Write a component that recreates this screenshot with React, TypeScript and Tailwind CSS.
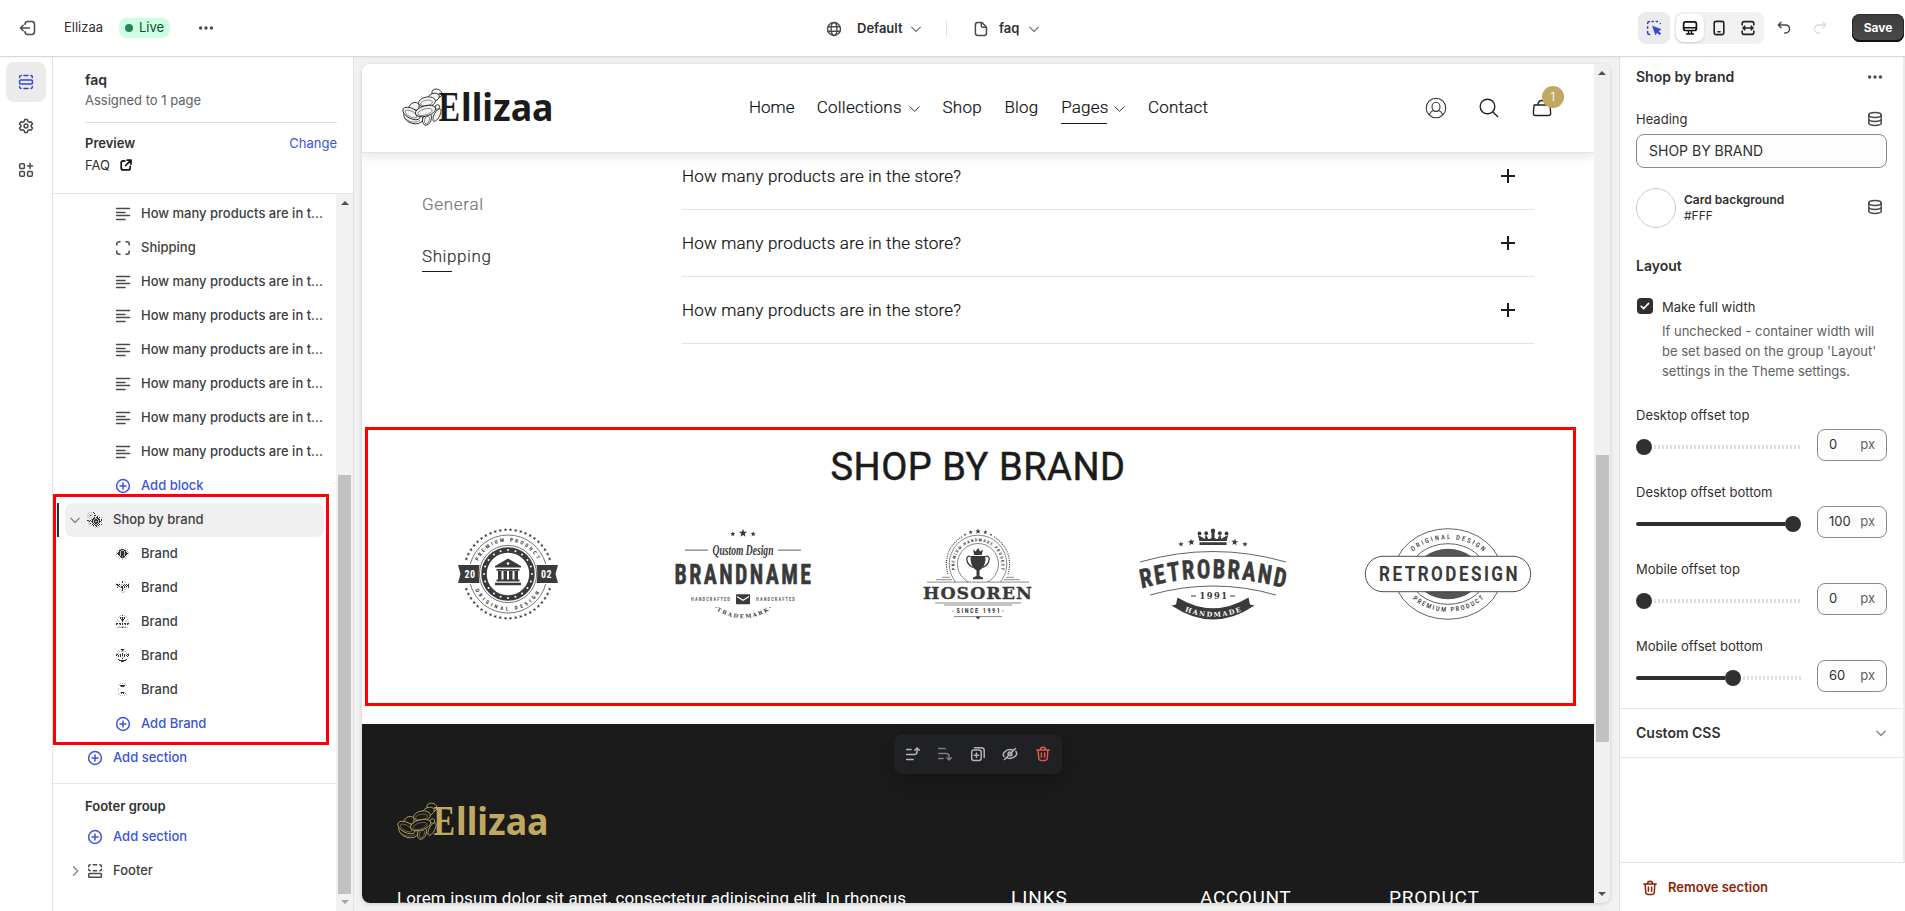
import React from "react";
import type { ReactNode } from "react";

const INK = "#3a3a3a";

type IconProps = { children: ReactNode; className?: string; sw?: number };
function Icon({ children, className = "text-[#4a4a4a]", sw = 1.5 }: IconProps) {
  return (
    <svg
      viewBox="0 0 20 20"
      width={20}
      height={20}
      fill="none"
      stroke="currentColor"
      strokeWidth={sw}
      strokeLinecap="round"
      strokeLinejoin="round"
      className={"block shrink-0 " + className}
    >
      {children}
    </svg>
  );
}

/* ---------- icons ---------- */
const ExitIcon = () => (
  <Icon>
    <path d="M7 6.500v-.2C7 4.700 8.200 3.600 9.700 3.600h4.100c1.600 0 2.700 1.200 2.700 2.700v7.400c0 1.600-1.200 2.700-2.700 2.700H9.700C8.200 16.400 7 15.300 7 13.700v-.2" />
    <path d="M11.500 10h-9M5.200 7.200 2.500 10l2.700 2.800" />
  </Icon>
);
const DotsIcon = () => (
  <Icon>
    <g fill="currentColor" stroke="none">
      <circle cx="4.600" cy="10" r="1.700" />
      <circle cx="10" cy="10" r="1.700" />
      <circle cx="15.400" cy="10" r="1.700" />
    </g>
  </Icon>
);
const GlobeIcon = () => (
  <Icon sw={1.400}>
    <circle cx="10" cy="10" r="6.500" />
    <ellipse cx="10" cy="10" rx="2.900" ry="6.500" />
    <path d="M4 7.800h12M4 12.200h12" />
  </Icon>
);
const PageIcon = () => (
  <Icon>
    <path d="M6.700 3.600h3.600c.5 0 1 .2 1.400.6l3.200 3.300c.4.400.600.900.600 1.400v5c0 1.400-1 2.500-2.400 2.500H6.700c-1.400 0-2.300-1-2.300-2.400V6c0-1.400 1-2.400 2.300-2.400Z" />
    <path d="M10.300 3.900v2.800c0 .9.700 1.600 1.600 1.600h3.200" />
  </Icon>
);
const ChevronDown = ({ className = "text-[#8a8a8a]" }: { className?: string }) => (
  <Icon className={className}>
    <path d="m5.800 8.300 4.200 4.200 4.200-4.200" />
  </Icon>
);
const SectionsIcon = () => (
  <Icon className="text-[#3045d8]">
    <rect x="3.600" y="8" width="12.800" height="4" rx="1" />
    <path d="M3.600 5.400v-.2c0-.9.600-1.600 1.500-1.600M8 3.600h4M14.900 3.600c.9 0 1.500.7 1.500 1.600v.2M3.600 14.600v.2c0 .9.600 1.600 1.500 1.600M8 16.400h4M14.900 16.400c.9 0 1.500-.7 1.500-1.600v-.2" />
  </Icon>
);
const GearIcon = () => (
  <Icon>
    <path d="M8.700 3.500h2.600l.5 1.900 1.500.9 1.900-.5 1.300 2.200-1.400 1.400v1.200l1.400 1.400-1.300 2.200-1.900-.5-1.500.9-.5 1.900H8.700l-.5-1.900-1.500-.9-1.900.5L3.500 12l1.400-1.400V9.400L3.500 8l1.300-2.200 1.900.5 1.500-.9.500-1.900Z" />
    <circle cx="10" cy="10" r="1.900" />
  </Icon>
);
const AppsIcon = () => (
  <Icon>
    <rect x="3.700" y="3.700" width="4.700" height="4.700" rx="1" />
    <rect x="3.700" y="11.600" width="4.700" height="4.700" rx="1" />
    <rect x="11.600" y="11.600" width="4.700" height="4.700" rx="1" />
    <path d="M14 3.500v5M11.500 6h5" />
  </Icon>
);
const ExternalIcon = () => (
  <svg viewBox="0 0 12 12" width={12} height={12} fill="none" stroke="#111" strokeWidth={1.700} strokeLinecap="round" strokeLinejoin="round">
    <path d="M4.800 1.900H3.200c-1.200 0-2 .8-2 2v5c0 1.200.8 2 2 2h5c1.200 0 2-.8 2-2V7.400M7.200 1.100h3.800v3.800M10.700 1.400 5.600 6.500" />
  </svg>
);
const LinesIcon = () => (
  <Icon className="text-[#4a4a4a]">
    <path d="M3.500 4.500h13.200M3.500 8.500h8.600M3.500 11.500h13.200M3.500 15.500h8.600" strokeWidth={1.300} />
  </Icon>
);
const BlockIcon = () => (
  <Icon>
    <path d="M7 3.800H6A2.200 2.200 0 0 0 3.800 6v1M13 3.800h1A2.200 2.200 0 0 1 16.200 6v1M7 16.200H6A2.200 2.200 0 0 1 3.800 14v-1M13 16.200h1a2.200 2.200 0 0 0 2.200-2.200v-1" />
  </Icon>
);
const PlusCircle = () => (
  <Icon className="text-[#3c54dc]">
    <circle cx="10" cy="10" r="6.400" />
    <path d="M10 7v6M7 10h6" />
  </Icon>
);
const FooterIcon = () => (
  <Icon>
    <rect x="3.700" y="12.600" width="12.700" height="3.700" rx=".8" />
    <path d="M3.700 5.800v-.6c0-.9.600-1.500 1.500-1.500M8.300 3.700h3.400M14.900 3.700c.9 0 1.500.6 1.500 1.500v.6M3.700 8.200c0 .9.600 1.500 1.500 1.500M8.300 9.700h3.400M14.900 9.700c.9 0 1.500-.6 1.500-1.500" />
  </Icon>
);
const DatabaseIcon = () => (
  <span className="-mt-0.5">
    <Icon>
      <ellipse cx="10" cy="6" rx="6.200" ry="2.400" />
      <path d="M3.800 6v8c0 1.300 2.800 2.400 6.200 2.400s6.200-1.100 6.200-2.400V6M3.800 10c0 1.300 2.800 2.400 6.200 2.400s6.200-1.100 6.200-2.400" />
    </Icon>
  </span>
);
const TrashIcon = () => (
  <Icon className="text-[#8e1f0b]">
    <path d="M3.800 6h12.400M7.500 5.800c0-1.500 1-2.500 2.500-2.500s2.500 1 2.500 2.500M5.200 6l.5 8.300c.1 1.200 1 2.100 2.200 2.100h4.200c1.200 0 2.100-.9 2.200-2.100l.5-8.300M8.400 9v4.300M11.600 9v4.300" />
  </Icon>
);

/* ---------- logos ---------- */
function EllizaaLogo({ color, petal }: { color: string; petal: string }) {
  return (
    <svg width={152} height={38} viewBox="0 0 152 38" className="block shrink-0 overflow-visible">
      <g fill={petal} stroke={color} strokeWidth={0.8}>
        <ellipse cx="35" cy="5.200" rx="5.200" ry="4" transform="rotate(20 35 5.200)" />
        <ellipse cx="31.500" cy="9.500" rx="6" ry="4" transform="rotate(-20 31.500 9.500)" />
        <ellipse cx="12" cy="19" rx="5.500" ry="4.200" transform="rotate(-30 12 19)" />
        <ellipse cx="11.500" cy="28.500" rx="10" ry="7" transform="rotate(18 11.500 28.500)" />
        <ellipse cx="9.500" cy="25.500" rx="9.500" ry="5" transform="rotate(28 9.500 25.500)" />
        <ellipse cx="25" cy="14" rx="8.500" ry="5" transform="rotate(-10 25 14)" />
        <ellipse cx="35" cy="27" rx="2.800" ry="7" transform="rotate(28 35 27)" />
        <ellipse cx="25" cy="31" rx="4.200" ry="6.500" transform="rotate(18 25 31)" />
        <ellipse cx="23.500" cy="23" rx="10.500" ry="5.200" transform="rotate(-16 23.500 23)" />
        <circle cx="35.500" cy="19" r="2.300" />
        <g strokeWidth={0.45} fill="none">
          <ellipse cx="24.500" cy="15" rx="6" ry="2.800" transform="rotate(-10 24.500 15)" />
          <ellipse cx="23" cy="24" rx="7.500" ry="3" transform="rotate(-16 23 24)" />
          <ellipse cx="25" cy="32" rx="2.300" ry="4" transform="rotate(18 25 32)" />
          <ellipse cx="9" cy="26" rx="6.500" ry="2.800" transform="rotate(28 9 26)" />
          <path d="M4 31c4 3.500 9 4 14 1.500" />
        </g>
      </g>
      <text x="36.500" y="32.500" fill={color} fontFamily="'Liberation Serif', serif" fontWeight={700} fontSize={43} textLength={21.500} lengthAdjust="spacingAndGlyphs">E</text>
      <text x="59" y="32.500" fill={color} fontFamily="'Noto Sans', sans-serif" fontWeight={700} fontSize={37.500} textLength={92.500} lengthAdjust="spacingAndGlyphs">llizaa</text>
    </svg>
  );
}

function star(cx: number, cy: number, r: number, rot = 0) {
  const pts: string[] = [];
  for (let i = 0; i < 10; i++) {
    const a = ((i * 36 - 90 + rot) * Math.PI) / 180;
    const q = i % 2 ? r * 0.42 : r;
    pts.push(`${(cx + q * Math.cos(a)).toFixed(2)},${(cy + q * Math.sin(a)).toFixed(2)}`);
  }
  return pts.join(" ");
}

function BadgeFrame({ children }: { children: ReactNode }) {
  return (
    <svg viewBox="-100 -46 200 92" width={200} height={92} fill={INK} className="block overflow-visible">
      {children}
    </svg>
  );
}

function BankBadge() {
  const stars = Array.from({ length: 54 }, (_, i) => i * (360 / 54)).filter(
    (a) => Math.abs(44.5 * Math.sin((a * Math.PI) / 180)) > 11
  );
  const dots = Array.from({ length: 20 }, (_, i) => (i * Math.PI) / 10);
  return (
    <BadgeFrame>
      <defs>
        <path id="bank-top" d="M-32.500 0A32.500 32.500 0 0 1 32.500 0" />
        <path id="bank-bottom" d="M-36.500 0A36.500 36.500 0 0 0 36.500 0" />
      </defs>
      {stars.map((a) => {
        const r = (a * Math.PI) / 180;
        return <polygon key={a} points={star(44.3 * Math.cos(r), 44.3 * Math.sin(r), 1.9, a + 90)} />;
      })}
      <g fill="none" stroke={INK}>
        <path d="M-37.700-10A39 39 0 0 1 37.700-10M-37.700 10A39 39 0 0 0 37.700 10" strokeWidth={0.7} />
        <circle r="28.600" strokeWidth={0.7} />
        <circle r="24" strokeWidth={5.500} />
      </g>
      {dots.map((a) => (
        <circle key={a} cx={24 * Math.cos(a)} cy={24 * Math.sin(a)} r={1} fill="#fff" />
      ))}
      <path d="M-50-9H-28.500Q-30 0-28.500 9H-50L-47.500 0ZM50-9H28.500Q30 0 28.500 9H50L47.500 0Z" />
      <g fontFamily="'Roboto Condensed', sans-serif" fontWeight={700} textAnchor="middle">
        <text x="-38" y="3.600" fontSize={10} fill="#fff" letterSpacing=".5">20</text>
        <text x="38.500" y="3.600" fontSize={10} fill="#fff" letterSpacing=".5">02</text>
        <text fontSize={5.200} letterSpacing="2.200">
          <textPath href="#bank-top" startOffset="50%">PREMIUM PRODUCT</textPath>
        </text>
        <text fontSize={5.200} letterSpacing="2.900">
          <textPath href="#bank-bottom" startOffset="50%">ORIGINAL DESIGN</textPath>
        </text>
      </g>
      <path d="M0-15.500 13-8v1.500H-13V-8ZM-11.500-5H11.500v1.700H-11.500ZM-10-3H-6.500V6H-10ZM-4.500-3H-1V6H-4.500ZM1-3H4.500V6H1ZM6.500-3H10V6H6.500ZM-11.500 5.500H11.500V7.500H-11.500ZM-13 8.700H13V11.200H-13Z" />
      <circle cy="-10.500" r="1.300" fill="#fff" />
    </BadgeFrame>
  );
}

function BrandnameBadge() {
  return (
    <BadgeFrame>
      <defs>
        <path id="tm" d="M-31 33.500Q0 55 31 33.500" />
      </defs>
      <polygon points={star(0, -40.8, 4.400)} />
      <polygon points={star(-10.200, -40, 2.700)} />
      <polygon points={star(10.200, -40, 2.700)} />
      <path d="M-58-24.400H-35v1.200H-58ZM35-24.400H58v1.200H35Z" opacity=".65" />
      <text x="-30.500" y="-19.500" fontFamily="'Liberation Serif', serif" fontStyle="italic" fontWeight={700} fontSize={14.500} textLength={61} lengthAdjust="spacingAndGlyphs">Qustom Design</text>
      <g fontFamily="'Roboto Condensed', sans-serif" fontWeight={700}>
        <text x="-68.500" y="10" fontSize={27.700} letterSpacing="3" textLength={139} lengthAdjust="spacingAndGlyphs" stroke={INK} strokeWidth={0.5}>BRANDNAME</text>
        <g fontSize={5.600} opacity=".8">
          <text x="-52" y="27.300" letterSpacing="1.400" textLength={40} lengthAdjust="spacingAndGlyphs">HANDCRAFTED</text>
          <text x="13" y="27.300" letterSpacing="1.400" textLength={40} lengthAdjust="spacingAndGlyphs">HANDCRAFTED</text>
        </g>
      </g>
      <rect x="-7" y="20.300" width="14" height="10" rx=".8" />
      <path d="M-6 22.500 0 26.300 6 22.500" fill="none" stroke="#fff" strokeWidth={1.100} />
      <text fontFamily="'DejaVu Serif', serif" fontWeight={700} fontSize={5.400} textAnchor="middle" letterSpacing="1.800">
        <textPath href="#tm" startOffset="51%">TRADEMARK</textPath>
      </text>
      <circle cx="-27" cy="33.500" r=".6" />
      <circle cx="27" cy="33.500" r=".6" />
    </BadgeFrame>
  );
}

function HosorenBadge() {
  return (
    <BadgeFrame>
      <defs>
        <path id="cup-arc" d="M-19.500 4A23.500 23.500 0 1 1 19.500 4" />
        <clipPath id="cup-clip">
          <rect x="-60" y="-46" width="120" height="54" />
        </clipPath>
      </defs>
      <polygon points={star(0, -42.600, 2.900)} />
      {[-1, 1].map((s) => (
        <g key={s}>
          <polygon points={star(7.300 * s, -41.700, 2.200)} />
          <polygon points={star(13 * s, -39.300, 1.500)} />
        </g>
      ))}
      <g fill="none" stroke={INK} strokeWidth={0.6}>
        <path d="M-36 3.300H-28M28 3.300H36M-42 5.700H-26M26 5.700H42M-51 8.100H51M-43 29H43M-34 31H34M-24 42.600H24" />
        <g clipPath="url(#cup-clip)">
          <circle cy="-10" r="28.800" />
          <circle cy="-10" r="20.500" />
        </g>
        <path d="M-30 0A31.500 31.500 0 0 1-16-37.200M30 0A31.500 31.500 0 0 0 16-37.200" strokeWidth={1.200} strokeDasharray="1 1.200" />
      </g>
      <text fontFamily="'Roboto Condensed', sans-serif" fontWeight={700} fontSize={4.200} textAnchor="middle" letterSpacing="1.200">
        <textPath href="#cup-arc" startOffset="50.500%">PREMIUM HANDMADE PRODUCT</textPath>
      </text>
      <path d="M-3.800-19-5-24.500-2.300-22.500 0-26 2.300-22.500 5-24.500 3.800-19ZM-7.500-18H7.500Q8-7 1.500-3.500V2L5 3.500V5.200H-5V3.500L-1.500 2V-3.500Q-8-7-7.500-18Z" />
      <path d="M-7.500-17.500C-13-19.500-12.500-10-5-6.500M7.500-17.500C13-19.500 12.500-10 5-6.500" fill="none" stroke={INK} strokeWidth={1.300} />
      <text x="-55" y="24.500" fontFamily="'DejaVu Serif', serif" fontWeight={700} fontSize={17.200} textLength={110} letterSpacing="1" lengthAdjust="spacingAndGlyphs" stroke={INK} strokeWidth={0.3}>HOSOREN</text>
      <text x="-21.500" y="39.300" fontFamily="'Roboto Condensed', sans-serif" fontWeight={700} fontSize={7} letterSpacing="1.800" textLength={45} lengthAdjust="spacingAndGlyphs">SINCE 1991</text>
      <circle cx="-25" cy="37" r=".6" />
      <circle cx="25" cy="37" r=".6" />
      <path d="M-2.500 42.600H2.500L0 45.500Z" />
    </BadgeFrame>
  );
}

function RetrobrandBadge() {
  return (
    <BadgeFrame>
      <defs>
        <path id="rb-arc" d="M-92 16.500Q0-8.500 92 16.500" />
        <path id="rb-ribbon" d="M-36 32Q0 50.500 36 32" />
      </defs>
      <path d="M-13.500-33-15.200-39-10.500-36.500-8.500-34.500-7-40-4.500-34.500-1.500-36V-43H1.500V-36L4.500-34.500 7-40 8.500-34.500 10.500-36.500 15.200-39 13.500-33ZM-13.500-31.800H13.500V-29H-13.500Z" />
      <path d="M-13.500-38V-33H13.500V-38L8.500-35H-8.500Z" />
      <circle cy="-43.300" r="2.200" />
      {[-1, 1].map((s) => (
        <g key={s}>
          <circle cx={6.800 * s} cy="-40.800" r="1.900" />
          <circle cx={13.500 * s} cy="-40.600" r="1.900" />
          <polygon points={star(21.700 * s, -31.800, 3.600, 8 * s)} />
          <polygon points={star(32 * s, -29.800, 2.800, 8 * s)} />
        </g>
      ))}
      <path d="M-73-12Q0-33 73-12M-63 21Q0 3 63 21" fill="none" stroke={INK} strokeWidth={0.8} />
      <text transform="scale(.85 1)" fontFamily="'Roboto Condensed', sans-serif" fontWeight={700} fontSize={26.500} textAnchor="middle" letterSpacing="2.300" stroke={INK} strokeWidth={0.5}>
        <textPath href="#rb-arc" startOffset="50.600%">RETROBRAND</textPath>
      </text>
      <path d="M-22 21.500H-17v1H-22ZM17 21.500H22v1H17Z" />
      <text x="-13.500" y="25.300" fontFamily="'DejaVu Serif', serif" fontWeight={700} fontSize={8.500} letterSpacing="1.500" textLength={29} lengthAdjust="spacingAndGlyphs">1991</text>
      <path d="M-35.500 23.500Q0 45 35.500 23.500L37 30.500 41.500 31.500Q0 59.500-41.500 31.500L-37 30.500Z" />
      <text fontFamily="'DejaVu Serif', serif" fontWeight={700} fontSize={6.600} textAnchor="middle" letterSpacing="1.500" fill="#fff" dy="1.500">
        <textPath href="#rb-ribbon" startOffset="51%">HANDMADE</textPath>
      </text>
    </BadgeFrame>
  );
}

function RetrodesignBadge() {
  return (
    <BadgeFrame>
      <defs>
        <path id="rd-top" d="M-43-12A46 35.500 0 0 1 43-12" />
        <path id="rd-bottom" d="M-45 12A48 39.500 0 0 0 45 12" />
      </defs>
      <g fill="none" stroke={INK} strokeWidth={0.8}>
        <ellipse rx="54" ry="45.300" />
        <ellipse rx="38.500" ry="30.300" />
      </g>
      <ellipse rx="32.400" ry="25.300" fill="#555" />
      <rect x="-82.700" y="-17.700" width="165.400" height="35.400" rx="17.700" fill="#fff" stroke={INK} strokeWidth={0.9} />
      <text x="-69" y="7.400" fontFamily="Roboto, sans-serif" fontWeight={700} fontSize={21} letterSpacing="3" textLength={141} lengthAdjust="spacingAndGlyphs">RETRODESIGN</text>
      <g fontFamily="'Roboto Condensed', sans-serif" fontWeight={500} textAnchor="middle" fontSize={6.600}>
        <text letterSpacing="2">
          <textPath href="#rd-top" startOffset="51%">ORIGINAL DESIGN</textPath>
        </text>
        <text letterSpacing="1.700">
          <textPath href="#rd-bottom" startOffset="51%">PREMIUM PRODUCT</textPath>
        </text>
      </g>
    </BadgeFrame>
  );
}

/* ---------- thumbnails of the brand blocks ---------- */
const THUMBS: string[][] = [
  ["......o......", "...o.....o...", "....o###o....", "..o##ooo##o..", ".o.#o###o#.o.", "o.##o###o##.o", ".###o###o###.", "o.##o###o##.o", "...#o###o#...", "..o.##o##.o..", "....o###o....", "...o..o..o...", "......o......"],
  ["......#......", "...o..#..o...", "o...........o", "##o#.oo.#.#.#", ".##.o..#.#.##", "..o#.##.#.#.#", ".#..o##.#.o.#", "......#o.....", "...o..#..o...", "......#......", ".....o..o....", "......oo.....", "............."],
  ["....o.#.o....", "...o.....o...", "..o.#o#o#.o..", "....#.#.#....", ".o...###...o.", "..o..o#o..o..", "o..o..#..o..o", "......o......", "##.##.#.##.##", "#o.o#.#.o#.#o", ".............", "...o.ooo.o...", ".ooooo#ooooo."],
  ["....o###o....", ".....o#o.....", "...o.ooo.o...", ".............", "o.o...#...o.o", "##.o#.#.#o.##", "#.#.#.#.#.#.#", "..#.#.o.#..#.", "o....o.o....o", "......#......", "..#o.....o#..", "...#######...", ".....###....."],
  ["....o.o.o....", "...o.....o...", "..o.#####.o..", "....o###o....", ".............", "..o..........", ".............", "..o..........", ".............", "....o###o....", "...o.#.#.o...", "..o.......o..", "....o.o.o...."],
];
function Thumb({ rows, box = "-3 -3 20 20" }: { rows: string[]; box?: string }) {
  return (
    <svg width={20} height={20} viewBox={box} className="block shrink-0" shapeRendering="crispEdges">
      {rows.flatMap((r, y) =>
        r.split("").map((ch, x) =>
          ch === "." ? null : <rect key={x + "-" + y} x={x} y={y} width={1} height={1} fill={ch === "#" ? "#333" : "#bdbdbd"} />
        )
      )}
    </svg>
  );
}
const GROUP_THUMB = [
  "..o.o.#.........", ".o..o..#........", "o.o..o..........", ".o.#o..##..o....", "o.o..o..o.#.....", ".o..o.o#.##.#.o.", "..o.o.##oo##....", "....o##o##o##.#.", "##.#.#o####o#.#.", ".o#.##o#oo#o##..", "..o..#o####o#.o.", ".o.#..#o##o#....", "..o..#.#oo#.#.#.", "....o.#.##.#....", "......o..#..o...", "........o.o.....",
];

/* ---------- shell ---------- */
function TopBar() {
  return (
    <header className="relative z-10 flex h-14 shrink-0 items-center justify-between bg-white pl-[18px] shadow-[0_1px_0_#d8d8d8,0_2px_2px_rgba(0,0,0,0.04)]">
      <div className="flex h-full w-[600px] items-center pb-px">
        <ExitIcon />
        <span className="ml-[26px] w-[55px]">Ellizaa</span>
        <span className="mt-px flex h-5 w-[51px] items-center gap-1.5 rounded-lg bg-[#cdfee1] pl-1.5 text-[#0c5132]">
          <i className="size-2 rounded-full bg-[#29845a]" />
          Live
        </span>
        <span className="ml-[26px]">
          <DotsIcon />
        </span>
      </div>
      <div className="flex h-full flex-1 items-center pt-px pl-[206px] font-semibold">
        <GlobeIcon />
        <span className="ml-[13px] w-[49px]">Default</span>
        <ChevronDown />
        <span className="mx-5 h-4 w-px bg-[#e3e3e3]" />
        <span className="ml-1">
          <PageIcon />
        </span>
        <span className="ml-2 w-[25px]">faq</span>
        <ChevronDown />
      </div>
      <div className="flex h-full items-center pr-px">
        <span className="mr-1 flex size-8 items-center justify-center rounded-lg bg-[#ebebeb]">
          <Icon className="text-[#3045d8]">
            <path d="M3.600 5.600v-.2c0-1 .8-1.800 1.800-1.800M8 3.600h1.200M12.300 3.600h1.200M16.400 5.600v-.2M3.600 8.800v1.400M3.600 13.500v1c0 1 .8 1.900 1.800 1.900h.3" />
            <path d="m8.800 8.600 2.800 8 1.500-2.300 2.400 2.400 1.200-1.200-2.400-2.400 2.300-1.500Z" fill="currentColor" strokeWidth={0.8} />
          </Icon>
        </span>
        <span className="flex h-8 w-[90px] items-center rounded-lg bg-[#f1f1f1] pl-0.5 text-[#1a1a1a]">
          <span className="flex size-7 items-center justify-center rounded-lg bg-white shadow-[0_1px_2px_rgba(0,0,0,0.15)]">
            <Icon className="text-[#111]" sw={1.700}>
              <rect x="3.600" y="3.900" width="12.800" height="8.600" rx="2" />
              <path d="M4 9.700h12M8.500 12.700v3M11.500 12.700v3M6.500 16.100h7" strokeWidth={1.500} />
            </Icon>
          </span>
          <span className="ml-[5px]">
            <Icon className="text-[#222]" sw={1.600}>
              <rect x="5.200" y="3.400" width="9.600" height="13.200" rx="2" />
              <path d="M9 13.800h2" />
            </Icon>
          </span>
          <span className="ml-[9px]">
            <Icon className="text-[#222]" sw={1.600}>
              <path d="M4.200 7V5.600c0-1.200.9-2 2-2h7.600c1.200 0 2 .8 2 2V7M4.200 13v1.400c0 1.200.9 2 2 2h7.600c1.200 0 2-.8 2-2V13M5.500 10h9M6.800 8.200 5 10l1.800 1.800M13.200 8.200 15 10l-1.800 1.800" />
            </Icon>
          </span>
        </span>
        <span className="ml-2.5">
          <Icon>
            <path d="M7 4.300 4.300 7 7 9.700M4.500 7h7c2.400 0 4 1.800 4 4s-1.700 4-4 4h-.8" />
          </Icon>
        </span>
        <span className="ml-4">
          <Icon className="text-[#dcdcdc]">
            <path d="M13 4.300 15.700 7 13 9.700M15.500 7h-7c-2.400 0-4 1.800-4 4s1.700 4 4 4h.8" />
          </Icon>
        </span>
        <button className="ml-[22px] flex h-7 w-[52px] items-center justify-center rounded-lg bg-linear-to-b from-[#3d3d3d] to-[#4a4a4a] pb-px text-xs font-bold text-white shadow-[inset_0_-2px_0_#111,inset_0_0_0_1px_#2a2a2a]">
          Save
        </button>
      </div>
    </header>
  );
}

function Rail() {
  return (
    <nav className="flex w-[53px] shrink-0 flex-col items-center gap-1 border-r border-[#e3e3e3] bg-white pt-[5px]">
      <span className="flex size-10 items-center justify-center rounded-lg bg-[#ebebeb]"><SectionsIcon /></span>
      <span className="flex size-10 items-center justify-center"><GearIcon /></span>
      <span className="flex size-10 items-center justify-center"><AppsIcon /></span>
    </nav>
  );
}

function Row({ icon, label, level = 2, link = false }: { icon: ReactNode; label: string; level?: 1 | 2; link?: boolean }) {
  return (
    <div className={"flex h-[34px] items-center gap-2 font-medium " + (level === 2 ? "pl-[60px] " : "pl-8 ") + (link ? "text-[#3c54dc]" : "text-[#404040]")}>
      {icon}
      <span className="whitespace-nowrap">{label}</span>
    </div>
  );
}

function ScrollArrow({ up = false, color = "#505050" }: { up?: boolean; color?: string }) {
  return (
    <svg width={8} height={4} viewBox="0 0 8 4" className="block">
      <path d={up ? "M4 0 8 4H0Z" : "M0 0H8L4 4Z"} fill={color} />
    </svg>
  );
}

function Sidebar() {
  const q = "How many products are in t...";
  return (
    <aside className="flex w-[301px] shrink-0 flex-col border-r border-[#e3e3e3] bg-white">
      <div className="h-[137px] shrink-0 border-b border-[#e6e6e6] pt-[13px] pr-4 pl-8">
        <div className="text-sm leading-5 font-semibold">faq</div>
        <div className="leading-5 text-[#616161]">Assigned to 1 page</div>
        <div className="mt-3 h-px bg-[#e0e0e0]" />
        <div className="mt-2.5 flex justify-between leading-5">
          <span className="font-semibold">Preview</span>
          <span className="text-[#3c54dc]">Change</span>
        </div>
        <div className="mt-0.5 flex items-center gap-2.5 leading-5">
          FAQ
          <ExternalIcon />
        </div>
      </div>
      <div className="flex min-h-0 flex-1">
        <div className="w-[283px] pt-[3px]">
          <Row icon={<LinesIcon />} label={q} />
          <Row icon={<BlockIcon />} label="Shipping" />
          {[0, 1, 2, 3, 4, 5].map((i) => (
            <Row key={i} icon={<LinesIcon />} label={q} />
          ))}
          <Row icon={<PlusCircle />} label="Add block" link />
          <div className="flex h-[34px] pl-1">
            <span className="w-0.5 bg-[#303030]" />
            <div className="ml-1.5 flex w-[259px] items-center rounded-lg bg-[#f0f0f0] font-medium text-[#404040]">
              <ChevronDown />
              <Thumb rows={GROUP_THUMB} box="-2 -2 20 20" />
              <span className="ml-2">Shop by brand</span>
            </div>
          </div>
          {THUMBS.map((t, i) => (
            <Row key={i} icon={<Thumb rows={t} />} label="Brand" />
          ))}
          <Row icon={<PlusCircle />} label="Add Brand" link />
          <Row icon={<PlusCircle />} label="Add section" level={1} link />
          <div className="mt-2 border-t border-[#e6e6e6] pt-3">
            <div className="pl-8 leading-5 font-semibold">Footer group</div>
            <div className="h-1" />
            <Row icon={<PlusCircle />} label="Add section" level={1} link />
            <div className="flex h-[34px] items-center pl-3 font-medium text-[#404040]">
              <Icon className="text-[#8a8a8a]"><path d="m8.500 5.800 4.200 4.200-4.200 4.200" /></Icon>
              <FooterIcon />
              <span className="ml-2">Footer</span>
            </div>
          </div>
        </div>
        <div className="flex w-[17px] flex-col items-center bg-[#f1f1f1] pt-[7px]">
          <ScrollArrow up />
          <div className="mt-[270px] h-[419px] w-[13px] shrink-0 bg-[#c1c1c1]" />
          <div className="mt-1.5"><ScrollArrow color="#a3a3a3" /></div>
        </div>
      </div>
    </aside>
  );
}

/* ---------- storefront preview ---------- */
function NavLink({ label, w, ls, active = false, menu = false }: { label: string; w: string; ls: string; active?: boolean; menu?: boolean }) {
  return (
    <span className="flex items-center">
      <span className={"relative flex h-[34px] items-center whitespace-nowrap " + w + " " + ls}>
        {label}
        {active && <i className="absolute bottom-px left-0 h-px w-full bg-[#1b1b1b]" />}
      </span>
      {menu && (
        <svg width={11} height={6} viewBox="0 0 11 6" fill="none" stroke="#333" strokeWidth={1} className="mt-0.5 ml-[7px]">
          <path d="M.5.500 5.500 5.300 10.500.500" />
        </svg>
      )}
    </span>
  );
}

function StoreHeader() {
  return (
    <div className="relative z-10 flex h-[89px] shrink-0 items-center border-b border-[#e3e3e3] bg-white pl-10 shadow-[0_4px_10px_rgba(0,0,0,0.10)]">
      <div className="mr-[195px] pb-0.5">
        <EllizaaLogo color="#1b1b1b" petal="#f4f4f4" />
      </div>
      <nav className="flex w-[459px] items-center justify-between text-[17px] text-[#111]">
        <NavLink label="Home" w="w-[45px]" ls="tracking-[0px]" />
        <NavLink label="Collections" w="w-[85px]" ls="tracking-[0.22px]" menu />
        <NavLink label="Shop" w="w-[39px]" ls="tracking-[0.2px]" />
        <NavLink label="Blog" w="w-[34px]" ls="tracking-[0.2px]" />
        <NavLink label="Pages" w="w-[46px]" ls="tracking-[0.2px]" active menu />
        <NavLink label="Contact" w="w-[60px]" ls="tracking-[0.2px]" />
      </nav>
      <div className="ml-[217px] flex items-center">
        <svg width={22} height={22} viewBox="0 0 22 22" fill="none" stroke="#333" strokeWidth={1.100}>
          <circle cx="11" cy="11" r="9.800" />
          <ellipse cx="11" cy="9.800" rx="4" ry="4.600" />
          <path d="M4.300 18c.8-2.600 2.600-4.300 4.500-4.300M17.700 18c-.8-2.600-2.600-4.300-4.500-4.300" />
        </svg>
        <svg width={20} height={20} viewBox="0 0 20 20" fill="none" stroke="#222" strokeWidth={1.400} className="ml-8">
          <circle cx="8.500" cy="8.500" r="7.300" />
          <path d="m13.700 13.700 5.300 5.300" />
        </svg>
        <span className="relative ml-[33px]">
          <svg width={20} height={20} viewBox="0 0 20 20" fill="none" stroke="#222" strokeWidth={1.400}>
            <path d="M2.200 7h15.600c.5 3 .8 6 .8 8.500 0 1.300-.8 2-2 2H3.400c-1.200 0-2-.7-2-2 0-2.500.3-5.500.8-8.500ZM5.800 7c.2-2.700 1.900-4.500 4.200-4.500s4 1.800 4.200 4.500" />
          </svg>
          <i className="absolute -top-3 left-[10px] flex size-[22px] items-center justify-center rounded-full bg-[#c1a862] font-[Roboto,sans-serif] text-xs text-white not-italic">1</i>
        </span>
      </div>
    </div>
  );
}

const PlusMark = () => (
  <svg width={14} height={14} viewBox="0 0 14 14" stroke="#1b1b1b" strokeWidth={2} className="mr-[19px] block">
    <path d="M7 0V14M0 7H14" />
  </svg>
);

function ToolbarIcon({ children, className = "text-[#b5b5b5]" }: { children: ReactNode; className?: string }) {
  return <Icon className={className}>{children}</Icon>;
}

function Preview() {
  return (
    <main className="flex min-w-0 flex-1 bg-[#f1f1f1] pt-[7px] pr-[9px] pb-2 pl-2">
      <div className="relative flex flex-1 overflow-hidden rounded-lg bg-[#f0f0f0] shadow-[0_1px_4px_rgba(0,0,0,0.15)]">
        <div className="flex w-[1232px] flex-col overflow-hidden bg-white font-[Roboto,'Noto_Sans',sans-serif] font-light text-[#111] [-webkit-text-stroke:0.2px]">
          <StoreHeader />
          <div className="-mt-2.5 flex h-[284px] shrink-0 pl-[60px] text-[17px]">
            <div className="flex w-[260px] flex-col items-start pt-[50px] leading-[22px]">
              <span className="tracking-[0.7px] text-[#777]">General</span>
              <span className="mt-[30px] tracking-[0.6px] text-[#333]">Shipping</span>
              <i className="mt-1 h-px w-[30px] bg-[#1b1b1b]" />
            </div>
            <div className="w-[852px]">
              {[0, 1, 2].map((i) => (
                <div key={i} className="flex h-[67px] items-center justify-between border-b border-[#e3e3e3] tracking-[0.18px]">
                  <span className="pt-px">How many products are in the store?</span>
                  <PlusMark />
                </div>
              ))}
            </div>
          </div>
          <section className="flex h-[297px] shrink-0 flex-col items-center pt-[14px]">
            <h2 className="text-[38px] leading-[53px] font-normal tracking-[0.55px] text-[#1b1b1b] [-webkit-text-stroke:0.5px]">SHOP BY BRAND</h2>
            <div className="mt-[34px] grid w-[1176px] grid-cols-5 justify-items-center [-webkit-text-stroke:0px]">
              <BankBadge />
              <BrandnameBadge />
              <HosorenBadge />
              <RetrobrandBadge />
              <RetrodesignBadge />
            </div>
          </section>
          <footer className="flex-1 bg-[#1b1b1b] px-[35px] pt-[78px] text-white [-webkit-text-stroke:0px]">
            <EllizaaLogo color="#c1a862" petal="#1b1b1b" />
            <div className="mt-[46px] flex text-[17px] leading-6 whitespace-nowrap">
              <p className="w-[614px] font-normal tracking-[0.1px]">Lorem ipsum dolor sit amet, consectetur adipiscing elit. In rhoncus</p>
              <p className="w-[189px] text-[19px] font-normal tracking-[0.9px]">LINKS</p>
              <p className="w-[189px] text-[19px] font-normal tracking-[0.6px]">ACCOUNT</p>
              <p className="text-[19px] font-normal tracking-[0.8px]">PRODUCT</p>
            </div>
          </footer>
        </div>
        <div className="flex flex-1 flex-col items-center bg-[#f0f0f0] pt-[7px]">
          <ScrollArrow up />
          <div className="mt-[380px] h-[287px] w-[13px] bg-[#c1c1c1]" />
          <div className="mt-[150px]"><ScrollArrow /></div>
        </div>

        <div className="absolute top-[363px] left-[3px] z-20 h-[279px] w-[1211px] border-3 border-[#ff0000]" />
        <div className="absolute top-[670px] left-[532px] z-20 flex h-10 w-[168px] items-center gap-[12.4px] rounded-lg bg-[#202124] pl-[9px] shadow-[0_8px_28px_rgba(0,0,0,0.25)]">
          <ToolbarIcon>
            <path d="M3.600 5.500h4.500M3.600 10.500h7.500c2 0 3-1.200 3-3V4.500M11.800 6.200 14.100 4l2.300 2.200M3.600 15.500h6.500" />
          </ToolbarIcon>
          <ToolbarIcon className="text-[#7d7d7d]">
            <path d="M3.600 4.500h6.500M3.600 9.500h7.500c2 0 3 1.200 3 3v3M11.800 13.800l2.300 2.200 2.300-2.200M3.600 14.500h4.500" />
          </ToolbarIcon>
          <ToolbarIcon>
            <rect x="3.700" y="6" width="9.500" height="10.400" rx="2.200" />
            <path d="M6.500 3.700h6.800c1.700 0 2.900 1.200 2.900 2.900v6.800M8.450 9v4.400M6.250 11.200h4.400" />
          </ToolbarIcon>
          <ToolbarIcon>
            <path d="M4 12.500C2.900 10.800 3.100 9.400 4.300 8.200 6 6.300 7.800 5.500 10 5.500c1 0 1.800.2 2.600.5M16 7.500c1.100 1.700.9 3.100-.3 4.300-1.700 1.900-3.500 2.700-5.700 2.700-.8 0-1.600-.1-2.300-.4M15.500 4.500l-11 11M8 10.200C8 8.800 8.900 8 10.200 8M12 10c0 1.300-.8 2-2 2" />
          </ToolbarIcon>
          <ToolbarIcon className="text-[#e0564a]">
            <path d="M3.800 6h12.400M7.500 5.800c0-1.500 1-2.500 2.500-2.500s2.500 1 2.500 2.500M5.200 6l.5 8.300c.1 1.200 1 2.100 2.200 2.100h4.200c1.200 0 2.100-.9 2.200-2.100l.5-8.300M8.400 9v4.300M11.600 9v4.300" />
          </ToolbarIcon>
        </div>
      </div>
    </main>
  );
}

/* ---------- settings panel ---------- */
function RangeField({ label, value }: { label: string; value: number }) {
  const left = (value / 100) * 149;
  return (
    <div className="h-[77px]">
      <div className="leading-5">{label}</div>
      <div className="mt-1 flex items-center justify-between">
        <div className="mt-1 flex h-4 w-[165px] items-center">
          <div className="h-1 shrink-0 rounded-l-full bg-[#303030]" style={{ width: left }} />
          <div className="size-4 shrink-0 rounded-full bg-[#303030]" />
          <div className="h-1 flex-1 bg-[repeating-linear-gradient(90deg,#ffffff_0,#ffffff_2px,#e0e0e0_2px,#e0e0e0_4px)]" />
        </div>
        <div className="flex h-8 w-[70px] items-center justify-between rounded-lg border border-[#8a8a8a] bg-[#fdfdfd] pr-[11px] pl-[11px]">
          <span>{value}</span>
          <span className="text-[#616161]">px</span>
        </div>
      </div>
    </div>
  );
}

function Panel() {
  return (
    <aside className="flex w-[286px] shrink-0 flex-col border-l border-[#e3e3e3] bg-white">
      <div className="flex-1 border-r-2 border-[#ebebeb]">
        <div className="pt-2.5 pr-[18px] pl-4">
          <div className="flex items-center justify-between text-sm leading-5 font-semibold">
            Shop by brand
            <span className="-mt-px">
              <DotsIcon />
            </span>
          </div>
          <div className="mt-[23px] flex h-5 items-center justify-between">
            Heading
            <DatabaseIcon />
          </div>
        </div>
        <div className="mx-4 mt-1 flex h-[34px] w-[251px] items-center rounded-lg border border-[#8a8a8a] bg-[#fdfdfd] pl-3 text-sm">SHOP BY BRAND</div>
        <div className="mt-5 flex items-center pr-[18px] pl-4 text-xs">
          <span className="size-10 rounded-full border border-[#cccccc] bg-white" />
          <div className="ml-2 flex-1 leading-4">
            <div className="font-semibold">Card background</div>
            <div>#FFF</div>
          </div>
          <DatabaseIcon />
        </div>
        <div className="mt-[28px] pl-4 text-sm leading-5 font-semibold">Layout</div>
        <div className="mt-[21px] flex pr-4 pl-[17px]">
          <span className="mt-px flex size-4 shrink-0 items-center justify-center rounded bg-[#303030]">
            <svg width={10} height={8} viewBox="0 0 10 8" fill="none" stroke="#fff" strokeWidth={1.600} strokeLinecap="round" strokeLinejoin="round">
              <path d="m1.200 4.200 2.400 2.400 5-5.200" />
            </svg>
          </span>
          <div className="ml-[9px] leading-5">
            <div>Make full width</div>
            <div className="mt-1 w-[220px] text-[#616161]">
              If unchecked - container width will
              <br />
              be set based on the group 'Layout'
              <br />
              settings in the Theme settings.
            </div>
          </div>
        </div>
        <div className="mt-6 h-[304px] border-b border-[#e6e6e6] pr-4 pl-4">
          <RangeField label="Desktop offset top" value={0} />
          <RangeField label="Desktop offset bottom" value={100} />
          <RangeField label="Mobile offset top" value={0} />
          <RangeField label="Mobile offset bottom" value={60} />
        </div>
        <div className="flex h-[49px] items-center justify-between border-b border-[#e6e6e6] pr-3 pl-4 text-sm font-semibold">
          Custom CSS
          <ChevronDown />
        </div>
      </div>
      <div className="flex h-[49px] shrink-0 items-center gap-2 border-t border-[#e3e3e3] pt-0.5 pl-5 font-semibold text-[#8e1f0b]">
        <TrashIcon />
        Remove section
      </div>
    </aside>
  );
}

export default function App() {
  return (
    <div className="relative flex h-[911px] w-[1905px] flex-col overflow-hidden bg-[#f1f1f1] font-[Inter,sans-serif] text-[13px] text-[#303030]">
      <TopBar />
      <div className="flex min-h-0 flex-1 pt-px">
        <Rail />
        <Sidebar />
        <Preview />
        <Panel />
      </div>
      <div className="absolute top-[494px] left-[53px] z-20 h-[251px] w-[276px] border-3 border-[#ff0000]" />
    </div>
  );
}
